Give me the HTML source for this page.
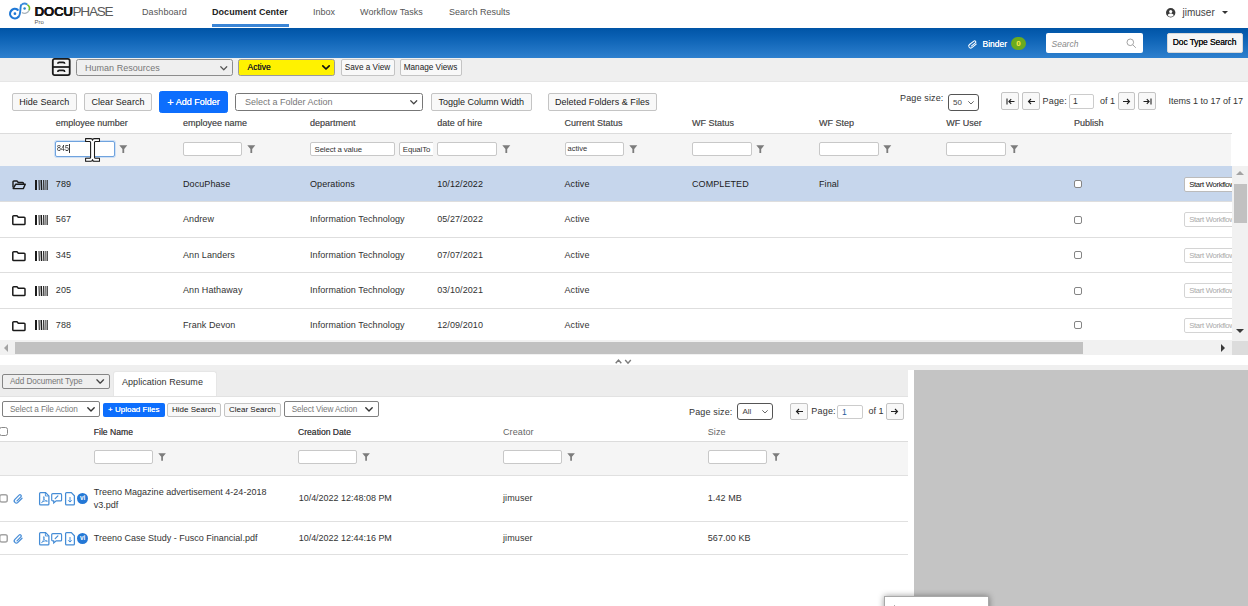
<!DOCTYPE html>
<html>
<head>
<meta charset="utf-8">
<title>DocuPhase - Document Center</title>
<style>
*{box-sizing:border-box;margin:0;padding:0}
html,body{width:1248px;height:606px;overflow:hidden;background:#fff}
body{font-family:"Liberation Sans",sans-serif;font-size:9px;color:#333;position:relative}
.a{position:absolute;white-space:nowrap}
.t{position:absolute;white-space:nowrap;line-height:12px;height:12px}
.btn{position:absolute;background:#f8f8f8;border:1px solid #c4c4c4;border-radius:2px;color:#222;text-align:center;white-space:nowrap}
.blue{background:#0d6efd;border-color:#0d6efd;color:#fff}
.sel{position:absolute;background:#fff;border:1px solid #8a8a8a;border-radius:2px;color:#666;white-space:nowrap}
.inp{position:absolute;background:#fff;border:1px solid #c8c8c8;border-radius:2px}
.hl{position:absolute;left:0;height:1px;background:#e2e2e2}
.cb{position:absolute;width:8px;height:8px;border:1px solid #777;border-radius:2px;background:#fff}
svg{position:absolute;overflow:visible}
</style>
</head>
<body>

<!-- ===== top header ===== -->
<div class="a" id="hdr" style="left:0;top:0;width:1248px;height:28px;background:#fff"></div>
<svg style="left:8px;top:1px" width="24" height="21" viewBox="0 0 24 21">
 <path d="M9.650 8.770A4.800 4.800 0 1 0 10.290 16.090" fill="none" stroke="#1f78d6" stroke-width="2.200" stroke-linecap="round"/>
 <path d="M10.290 16.090C13 13.800 11.900 7.300 13.030 4.290" fill="none" stroke="#2a7fd6" stroke-width="1.900" stroke-linecap="round"/>
 <path d="M13.030 4.290A4.800 4.800 0 0 1 19.350 3.570" fill="none" stroke="#3b8cdc" stroke-width="1.700"/>
 <path d="M19.350 3.570A4.800 4.800 0 0 1 20.950 9.530" fill="none" stroke="#72bf2c" stroke-width="1.600"/>
 <path d="M20.950 9.530A4.800 4.800 0 0 1 13.850 11.430" fill="none" stroke="#a9b4bd" stroke-width="1.300"/>
 <circle cx="6.900" cy="12.700" r="1.350" fill="#1f78d6"/><circle cx="16.600" cy="7.500" r="1.250" fill="#2a86c8"/>
</svg>
<div class="a" style="left:34.5px;top:2.5px;font-size:13.6px;line-height:17px;font-weight:bold;color:#161616;letter-spacing:-.450px;text-shadow:0 0 .5px #161616">DOCU</div>
<div class="a" style="left:72.5px;top:2.5px;font-size:13.6px;line-height:17px;color:#5a5a5a;letter-spacing:-1.25px">PHASE</div>
<div class="a" style="left:34.5px;top:17.5px;font-size:6px;line-height:8px;color:#555">Pro</div>
<div class="t" style="left:142px;top:6px;color:#555;letter-spacing:.1px">Dashboard</div>
<div class="t" style="left:212px;top:6px;color:#222;font-weight:bold;letter-spacing:.05px">Document Center</div>
<div class="a" style="left:212px;top:23.800px;width:77px;height:3px;background:#3a85d6"></div>
<div class="t" style="left:313px;top:6px;color:#555">Inbox</div>
<div class="t" style="left:360px;top:6px;color:#555;letter-spacing:.05px">Workflow Tasks</div>
<div class="t" style="left:449px;top:6px;color:#555">Search Results</div>
<svg style="left:1166px;top:8px" width="9.4" height="9.4" viewBox="0 0 20 20"><circle cx="10" cy="10" r="10" fill="#3a3a3a"/><circle cx="10" cy="7.6" r="3.4" fill="#fff"/><path d="M3.6 15.2c1.2-2.4 3.6-3.4 6.4-3.4s5.2 1 6.4 3.4a8 8 0 0 1-12.8 0z" fill="#fff"/></svg>
<div class="a" style="left:1182.5px;top:7px;font-size:10px;line-height:12px;color:#444">jimuser</div>
<div class="a" style="left:1221.5px;top:10.5px;width:0;height:0;border-left:3.2px solid transparent;border-right:3.2px solid transparent;border-top:3px solid #333"></div>

<!-- ===== blue bar ===== -->
<div class="a" style="left:0;top:28px;width:1248px;height:30px;background:linear-gradient(#0054a6 0%,#0a60b3 30%,#2e80ce 100%)"></div>
<svg style="left:968px;top:39px" width="10" height="10" viewBox="0 0 10 10"><path d="M3.6 7.3 7.2 3.6a1.15 1.15 0 0 0-1.7-1.6L1.6 6a1.9 1.9 0 0 0 2.8 2.7L8.2 4.6" fill="none" stroke="#fff" stroke-width="1" stroke-linecap="round" transform="rotate(8 5 5)"/></svg>
<div class="t" style="left:982.5px;top:38px;color:#fff;font-size:8.5px;text-shadow:0 0 .4px #fff;letter-spacing:0">Binder</div>
<div class="a" style="left:1011px;top:36.5px;width:15px;height:13px;border-radius:6.5px;background:#6bab1f;color:#ffe94a;font-size:8px;font-weight:bold;line-height:13px;text-align:center">0</div>
<div class="a" style="left:1045.500px;top:33.200px;width:97px;height:19.500px;background:#fff;border-radius:2px"></div>
<div class="t" style="left:1051.5px;top:37.5px;color:#8a8a8a;font-style:italic;font-size:8.5px">Search</div>
<svg style="left:1126px;top:37.5px" width="11" height="11" viewBox="0 0 11 11"><circle cx="4.3" cy="4.3" r="3.3" fill="none" stroke="#999" stroke-width=".9"/><path d="M6.8 6.8 9.8 9.8" stroke="#999" stroke-width=".9"/></svg>
<div class="a" style="left:1166.500px;top:33.200px;width:76px;height:19.500px;background:#f6f6f6;border:1px solid #d8d8d8;border-radius:2px;text-align:center;line-height:17px;font-size:8.5px;color:#111;text-shadow:0 0 .2px #111;letter-spacing:-.1px">Doc Type Search</div>

<!-- ===== view bar ===== -->
<div class="a" style="left:0;top:58px;width:1248px;height:23.500px;background:#efefef;border-bottom:1px solid #e6e6e6"></div>
<svg style="left:52.400px;top:58.100px" width="18.500" height="18" viewBox="0 0 18.500 17.500" preserveAspectRatio="none"><rect x=".8" y=".8" width="16.9" height="15.9" rx="1.800" fill="#f4f4f4" stroke="#1a1a1a" stroke-width="1.800"/><path d="M.8 8.750H17.700" stroke="#1a1a1a" stroke-width="1.700"/><path d="M5.800 5.700Q5.800 4.200 7.300 4.200H11.200Q12.700 4.200 12.700 5.700M5.800 13.500Q5.800 12 7.300 12H11.200Q12.700 12 12.700 13.500" fill="none" stroke="#1a1a1a" stroke-width="1.600"/></svg>
<div class="sel" style="left:75.5px;top:59px;width:157px;height:17px;background:#efefef;border-color:#8d8d8d;border-radius:2.500px;line-height:16.200px;padding-left:8.500px;color:#777;letter-spacing:.02px">Human Resources</div>
<svg style="left:220px;top:65.5px" width="7.5" height="4.5" viewBox="0 0 10 6"><path d="M1 1 5 5 9 1" fill="none" stroke="#555" stroke-width="1.60" stroke-linecap="round" stroke-linejoin="round"/></svg>
<div class="sel" style="left:237.5px;top:59px;width:97.5px;height:17px;background:#fff200;border-color:#9a9a9a;border-radius:2.5px;line-height:15px;padding-left:9px;color:#1a1a1a;font-size:8.500px;text-shadow:0 0 .3px #333">Active</div>
<svg style="left:321.5px;top:65.2px" width="8" height="4.8" viewBox="0 0 10 6"><path d="M1 1 5 5 9 1" fill="none" stroke="#111" stroke-width="2.12" stroke-linecap="round" stroke-linejoin="round"/></svg>
<div class="btn" style="left:340.5px;top:59px;width:54px;height:17px;line-height:15px;font-size:8.2px;color:#222">Save a View</div>
<div class="btn" style="left:399.5px;top:59px;width:62px;height:17px;line-height:15px;font-size:8.2px;color:#222">Manage Views</div>

<!-- ===== toolbar ===== -->
<div class="btn" style="left:12px;top:93px;width:64.5px;height:18px;line-height:16px;letter-spacing:.05px">Hide Search</div>
<div class="btn" style="left:84px;top:93px;width:68px;height:18px;line-height:16px;letter-spacing:.05px">Clear Search</div>
<div class="btn blue" style="left:159px;top:91px;width:69px;height:22px;line-height:20px;border-radius:2.5px;text-shadow:0 0 .5px #fff"><span style="font-size:11px;line-height:9px;vertical-align:-.5px">+</span> Add Folder</div>
<div class="sel" style="left:235px;top:93px;width:187.5px;height:18px;line-height:16px;padding-left:9px;border-color:#777;border-radius:2.5px;color:#777">Select a Folder Action</div>
<svg style="left:409.5px;top:99.5px" width="7.5" height="4.5" viewBox="0 0 10 6"><path d="M1 1 5 5 9 1" fill="none" stroke="#444" stroke-width="1.60" stroke-linecap="round" stroke-linejoin="round"/></svg>
<div class="btn" style="left:430.5px;top:93px;width:101.5px;height:18px;line-height:16px">Toggle Column Width</div>
<div class="btn" style="left:547.5px;top:93px;width:109.5px;height:18px;line-height:16px;letter-spacing:.05px">Deleted Folders &amp; Files</div>
<div class="t" style="left:900px;top:91.5px;color:#333;letter-spacing:.15px">Page size:</div>
<div class="sel" style="left:947.5px;top:94px;width:31px;height:17px;line-height:15px;padding-left:4.5px;border-color:#555;border-radius:3px;color:#444;font-size:8px">50</div>
<svg style="left:968px;top:101.2px" width="6" height="3.6" viewBox="0 0 10 6"><path d="M1 1 5 5 9 1" fill="none" stroke="#555" stroke-width="1.50" stroke-linecap="round" stroke-linejoin="round"/></svg>
<div class="btn" style="left:1001px;top:92px;width:18px;height:18px"></div>
<svg style="left:1005.5px;top:97.5px" width="9" height="7" viewBox="0 0 9 7"><path d="M1 .5V6.5M8.5 3.5H3M5.2 1.2 2.9 3.5 5.2 5.8" fill="none" stroke="#222" stroke-width="1.1"/></svg>
<div class="btn" style="left:1022px;top:92px;width:17.5px;height:18px"></div>
<svg style="left:1026.5px;top:97.5px" width="9" height="7" viewBox="0 0 9 7"><path d="M8 3.5H1.5M4 1 1.5 3.5 4 6" fill="none" stroke="#222" stroke-width="1.1"/></svg>
<div class="t" style="left:1042.5px;top:94.5px;color:#333;letter-spacing:.2px">Page:</div>
<div class="inp" style="left:1069px;top:94px;width:24.5px;height:14.5px;line-height:12.5px;padding-left:3px;font-size:8.5px;color:#333;border-color:#ccc">1</div>
<div class="t" style="left:1100px;top:94.5px;color:#333">of 1</div>
<div class="btn" style="left:1117.5px;top:92px;width:17.5px;height:18px"></div>
<svg style="left:1122px;top:97.5px" width="9" height="7" viewBox="0 0 9 7"><path d="M1 3.5H7.5M5 1 7.5 3.5 5 6" fill="none" stroke="#222" stroke-width="1.1"/></svg>
<div class="btn" style="left:1137.5px;top:92px;width:18.5px;height:18px"></div>
<svg style="left:1142.5px;top:97.5px" width="9" height="7" viewBox="0 0 9 7"><path d="M8 .5V6.5M.5 3.5H6M3.8 1.2 6.1 3.5 3.8 5.8" fill="none" stroke="#222" stroke-width="1.1"/></svg>
<div class="t" style="left:1168.5px;top:94.5px;color:#333">Items 1 to 17 of 17</div>

<!-- ===== grid ===== -->
<div class="t" style="left:55.8px;top:117.2px;color:#555;letter-spacing:0;text-shadow:0 0 .3px #777">employee number</div>
<div class="t" style="left:183px;top:117.2px;color:#555;letter-spacing:0;text-shadow:0 0 .3px #777">employee name</div>
<div class="t" style="left:310px;top:117.2px;color:#555;letter-spacing:0;text-shadow:0 0 .3px #777">department</div>
<div class="t" style="left:437.2px;top:117.2px;color:#555;letter-spacing:0;text-shadow:0 0 .3px #777">date of hire</div>
<div class="t" style="left:564.5px;top:117.2px;color:#555;letter-spacing:0;text-shadow:0 0 .3px #777">Current Status</div>
<div class="t" style="left:692px;top:117.2px;color:#555;letter-spacing:0;text-shadow:0 0 .3px #777">WF Status</div>
<div class="t" style="left:819px;top:117.2px;color:#555;letter-spacing:0;text-shadow:0 0 .3px #777">WF Step</div>
<div class="t" style="left:946.3px;top:117.2px;color:#555;letter-spacing:0;text-shadow:0 0 .3px #777">WF User</div>
<div class="t" style="left:1074px;top:117.2px;color:#555;letter-spacing:0;text-shadow:0 0 .3px #777">Publish</div>
<div class="hl" style="top:133px;width:1232px;background:#dcdcdc"></div>
<div class="a" style="left:0;top:134px;width:1231px;height:32px;background:#f5f5f5"></div>
<div class="inp" style="left:55px;top:141.200px;width:60.200px;height:15.500px;border:1.200px solid #6fa3de;box-shadow:0 0 0 1px #cfe0f5"></div><div class="a" style="left:57px;top:142.700px;font-size:7px;line-height:12px;color:#222;margin-top:-.5px;transform:scaleY(1.300);transform-origin:50% 50%;letter-spacing:.1px">845</div>
<div class="a" style="left:69.200px;top:144.200px;width:1px;height:8.500px;background:#333"></div>
<svg style="left:119px;top:144.6px" width="8.6" height="8.4" viewBox="0 0 8.6 8.4"><path d="M.3 .3H8.3L5.2 3.9V8.1H3.4V3.9Z" fill="#7c7c7c"/></svg>
<div class="inp" style="left:183px;top:141.7px;width:59px;height:14.8px;line-height:12.8px;padding-left:3px;font-size:7.5px;color:#333;"></div>
<svg style="left:246.5px;top:144.6px" width="8.6" height="8.4" viewBox="0 0 8.6 8.4"><path d="M.3 .3H8.3L5.2 3.9V8.1H3.4V3.9Z" fill="#7c7c7c"/></svg>
<div class="inp" style="left:310.2px;top:141.7px;width:85px;height:14.8px;line-height:14.600px;padding-left:3.400px;font-size:7.800px;color:#333;letter-spacing:-.120px;">Select a value</div>
<div class="a" style="left:399px;top:141.7px;width:34px;height:14.8px;overflow:hidden"><div class="inp" style="left:0;top:0;width:50px;height:14.800px;line-height:14.600px;padding-left:2.800px;font-size:7.800px;color:#333;letter-spacing:-.100px">EqualTo</div></div>
<div class="inp" style="left:437.3px;top:141.7px;width:59.7px;height:14.8px;line-height:12.8px;padding-left:3px;font-size:7.5px;color:#333;"></div>
<svg style="left:502px;top:144.6px" width="8.6" height="8.4" viewBox="0 0 8.6 8.4"><path d="M.3 .3H8.3L5.2 3.9V8.1H3.4V3.9Z" fill="#7c7c7c"/></svg>
<div class="inp" style="left:565px;top:141.7px;width:59px;height:14.8px;line-height:12.8px;padding-left:1.500px;font-size:7.500px;color:#333;">active</div>
<svg style="left:629px;top:144.6px" width="8.6" height="8.4" viewBox="0 0 8.6 8.4"><path d="M.3 .3H8.3L5.2 3.9V8.1H3.4V3.9Z" fill="#7c7c7c"/></svg>
<div class="inp" style="left:692px;top:141.7px;width:59.5px;height:14.8px;line-height:12.8px;padding-left:3px;font-size:7.5px;color:#333;"></div>
<svg style="left:756px;top:144.6px" width="8.6" height="8.4" viewBox="0 0 8.6 8.4"><path d="M.3 .3H8.3L5.2 3.9V8.1H3.4V3.9Z" fill="#7c7c7c"/></svg>
<div class="inp" style="left:819px;top:141.7px;width:59.5px;height:14.8px;line-height:12.8px;padding-left:3px;font-size:7.5px;color:#333;"></div>
<svg style="left:883px;top:144.6px" width="8.6" height="8.4" viewBox="0 0 8.6 8.4"><path d="M.3 .3H8.3L5.2 3.9V8.1H3.4V3.9Z" fill="#7c7c7c"/></svg>
<div class="inp" style="left:946.3px;top:141.7px;width:59.5px;height:14.8px;line-height:12.8px;padding-left:3px;font-size:7.5px;color:#333;"></div>
<svg style="left:1010.3px;top:144.6px" width="8.6" height="8.4" viewBox="0 0 8.6 8.4"><path d="M.3 .3H8.3L5.2 3.9V8.1H3.4V3.9Z" fill="#7c7c7c"/></svg>
<div class="a" style="left:0;top:166px;width:1248px;height:174.500px;overflow:hidden">
<div class="a" style="left:0;top:0;width:1232px;height:35px;background:#c6d6ec"></div>
<svg style="left:11.600px;top:13.6px" width="14.200" height="10.400" viewBox="0 0 14.200 10.400"><path d="M1 7.600V1.900c0-.5 .4-.9 .9-.9H5l1.300 1.500h4.300c.5 0 .9 .4 .9 .9v.9" fill="none" stroke="#1a1a1a" stroke-width="1.4" stroke-linejoin="round"/><path d="M3.600 4.300H13.300L11.300 8.600H1.200Z" fill="none" stroke="#1a1a1a" stroke-width="1.4" stroke-linejoin="round"/></svg>
<svg style="left:34.800px;top:13.5px" width="12.800" height="10" viewBox="0 0 12.800 10"><path d="M1 0V10" stroke="#1a1a1a" stroke-width="2"/><path d="M4 0 4.300 10" stroke="#1a1a1a" stroke-width="1"/><path d="M6.200 0 6.600 10" stroke="#1a1a1a" stroke-width="1.500"/><path d="M8.600 0 8.900 10" stroke="#333" stroke-width="1.300"/><path d="M10.500 0 10.700 10" stroke="#555" stroke-width=".8"/><path d="M12.200 0V10" stroke="#1a1a1a" stroke-width="1.100"/></svg>
<div class="t" style="left:55.8px;top:11.7px;color:#222;letter-spacing:.08px">789</div>
<div class="t" style="left:183px;top:11.7px;color:#222;letter-spacing:.08px">DocuPhase</div>
<div class="t" style="left:310px;top:11.7px;color:#222;letter-spacing:.08px">Operations</div>
<div class="t" style="left:437.2px;top:11.7px;color:#222;letter-spacing:.08px">10/12/2022</div>
<div class="t" style="left:564.5px;top:11.7px;color:#222;letter-spacing:.08px">Active</div>
<div class="t" style="left:692px;top:11.7px;color:#222;letter-spacing:.08px">COMPLETED</div>
<div class="t" style="left:819px;top:11.7px;color:#222;letter-spacing:.08px">Final</div>
<div class="cb" style="left:1074px;top:14.40px;border-color:#858585"></div>
<div class="a" style="left:1184px;top:10.6px;width:48px;height:15px;overflow:hidden"><div class="btn" style="left:0;top:0;width:70px;height:15px;line-height:13px;text-align:left;padding-left:4.200px;font-size:7.700px;letter-spacing:-.320px;background:#fff;border-color:#bbb;color:#111">Start Workflow</div></div>
<div class="hl" style="top:34.5px;width:1232px;background:#dedede"></div>
<svg style="left:11.600px;top:48.70px" width="14.200" height="10.400" viewBox="0 0 14.200 10.400"><path d="M.8 1.6c0-.5 .4-.9 .9-.9H5l1.3 1.5h5.8c.5 0 .9 .4 .9 .9v5.6c0 .5-.4 .9-.9 .9H1.700c-.5 0-.9-.4-.9-.9Z" fill="none" stroke="#1a1a1a" stroke-width="1.5" stroke-linejoin="round"/></svg>
<svg style="left:34.800px;top:48.60px" width="12.800" height="10" viewBox="0 0 12.800 10"><path d="M1 0V10" stroke="#1a1a1a" stroke-width="2"/><path d="M4 0 4.300 10" stroke="#1a1a1a" stroke-width="1"/><path d="M6.200 0 6.600 10" stroke="#1a1a1a" stroke-width="1.500"/><path d="M8.600 0 8.900 10" stroke="#333" stroke-width="1.300"/><path d="M10.500 0 10.700 10" stroke="#555" stroke-width=".8"/><path d="M12.200 0V10" stroke="#1a1a1a" stroke-width="1.100"/></svg>
<div class="t" style="left:55.8px;top:46.80px;color:#333;letter-spacing:.08px">567</div>
<div class="t" style="left:183px;top:46.80px;color:#333;letter-spacing:.08px">Andrew</div>
<div class="t" style="left:310px;top:46.80px;color:#333;letter-spacing:.08px">Information Technology</div>
<div class="t" style="left:437.2px;top:46.80px;color:#333;letter-spacing:.08px">05/27/2022</div>
<div class="t" style="left:564.5px;top:46.80px;color:#333;letter-spacing:.08px">Active</div>
<div class="cb" style="left:1074px;top:49.50px;border-color:#858585"></div>
<div class="a" style="left:1184px;top:45.70px;width:48px;height:15px;overflow:hidden"><div class="btn" style="left:0;top:0;width:70px;height:15px;line-height:13px;text-align:left;padding-left:4.200px;font-size:7.700px;letter-spacing:-.320px;background:#fff;border-color:#d4d4d4;color:#aaa">Start Workflow</div></div>
<div class="hl" style="top:70.7px;width:1232px;background:#dedede"></div>
<svg style="left:11.600px;top:84.60px" width="14.200" height="10.400" viewBox="0 0 14.200 10.400"><path d="M.8 1.6c0-.5 .4-.9 .9-.9H5l1.3 1.5h5.8c.5 0 .9 .4 .9 .9v5.6c0 .5-.4 .9-.9 .9H1.700c-.5 0-.9-.4-.9-.9Z" fill="none" stroke="#1a1a1a" stroke-width="1.5" stroke-linejoin="round"/></svg>
<svg style="left:34.800px;top:84.50px" width="12.800" height="10" viewBox="0 0 12.800 10"><path d="M1 0V10" stroke="#1a1a1a" stroke-width="2"/><path d="M4 0 4.300 10" stroke="#1a1a1a" stroke-width="1"/><path d="M6.200 0 6.600 10" stroke="#1a1a1a" stroke-width="1.500"/><path d="M8.600 0 8.900 10" stroke="#333" stroke-width="1.300"/><path d="M10.500 0 10.700 10" stroke="#555" stroke-width=".8"/><path d="M12.200 0V10" stroke="#1a1a1a" stroke-width="1.100"/></svg>
<div class="t" style="left:55.8px;top:82.70px;color:#333;letter-spacing:.08px">345</div>
<div class="t" style="left:183px;top:82.70px;color:#333;letter-spacing:.08px">Ann Landers</div>
<div class="t" style="left:310px;top:82.70px;color:#333;letter-spacing:.08px">Information Technology</div>
<div class="t" style="left:437.2px;top:82.70px;color:#333;letter-spacing:.08px">07/07/2021</div>
<div class="t" style="left:564.5px;top:82.70px;color:#333;letter-spacing:.08px">Active</div>
<div class="cb" style="left:1074px;top:85.40px;border-color:#858585"></div>
<div class="a" style="left:1184px;top:81.60px;width:48px;height:15px;overflow:hidden"><div class="btn" style="left:0;top:0;width:70px;height:15px;line-height:13px;text-align:left;padding-left:4.200px;font-size:7.700px;letter-spacing:-.320px;background:#fff;border-color:#d4d4d4;color:#aaa">Start Workflow</div></div>
<div class="hl" style="top:105.8px;width:1232px;background:#dedede"></div>
<svg style="left:11.600px;top:119.70px" width="14.200" height="10.400" viewBox="0 0 14.200 10.400"><path d="M.8 1.6c0-.5 .4-.9 .9-.9H5l1.3 1.5h5.8c.5 0 .9 .4 .9 .9v5.6c0 .5-.4 .9-.9 .9H1.700c-.5 0-.9-.4-.9-.9Z" fill="none" stroke="#1a1a1a" stroke-width="1.5" stroke-linejoin="round"/></svg>
<svg style="left:34.800px;top:119.60px" width="12.800" height="10" viewBox="0 0 12.800 10"><path d="M1 0V10" stroke="#1a1a1a" stroke-width="2"/><path d="M4 0 4.300 10" stroke="#1a1a1a" stroke-width="1"/><path d="M6.200 0 6.600 10" stroke="#1a1a1a" stroke-width="1.500"/><path d="M8.600 0 8.900 10" stroke="#333" stroke-width="1.300"/><path d="M10.500 0 10.700 10" stroke="#555" stroke-width=".8"/><path d="M12.200 0V10" stroke="#1a1a1a" stroke-width="1.100"/></svg>
<div class="t" style="left:55.8px;top:117.80px;color:#333;letter-spacing:.08px">205</div>
<div class="t" style="left:183px;top:117.80px;color:#333;letter-spacing:.08px">Ann Hathaway</div>
<div class="t" style="left:310px;top:117.80px;color:#333;letter-spacing:.08px">Information Technology</div>
<div class="t" style="left:437.2px;top:117.80px;color:#333;letter-spacing:.08px">03/10/2021</div>
<div class="t" style="left:564.5px;top:117.80px;color:#333;letter-spacing:.08px">Active</div>
<div class="cb" style="left:1074px;top:120.50px;border-color:#858585"></div>
<div class="a" style="left:1184px;top:116.70px;width:48px;height:15px;overflow:hidden"><div class="btn" style="left:0;top:0;width:70px;height:15px;line-height:13px;text-align:left;padding-left:4.200px;font-size:7.700px;letter-spacing:-.320px;background:#fff;border-color:#d4d4d4;color:#aaa">Start Workflow</div></div>
<div class="hl" style="top:141.700px;width:1232px;background:#dedede"></div>
<svg style="left:11.600px;top:154.5px" width="14.200" height="10.400" viewBox="0 0 14.200 10.400"><path d="M.8 1.6c0-.5 .4-.9 .9-.9H5l1.3 1.5h5.8c.5 0 .9 .4 .9 .9v5.6c0 .5-.4 .9-.9 .9H1.700c-.5 0-.9-.4-.9-.9Z" fill="none" stroke="#1a1a1a" stroke-width="1.5" stroke-linejoin="round"/></svg>
<svg style="left:34.800px;top:154.4px" width="12.800" height="10" viewBox="0 0 12.800 10"><path d="M1 0V10" stroke="#1a1a1a" stroke-width="2"/><path d="M4 0 4.300 10" stroke="#1a1a1a" stroke-width="1"/><path d="M6.200 0 6.600 10" stroke="#1a1a1a" stroke-width="1.500"/><path d="M8.600 0 8.900 10" stroke="#333" stroke-width="1.300"/><path d="M10.500 0 10.700 10" stroke="#555" stroke-width=".8"/><path d="M12.200 0V10" stroke="#1a1a1a" stroke-width="1.100"/></svg>
<div class="t" style="left:55.8px;top:152.6px;color:#333;letter-spacing:.08px">788</div>
<div class="t" style="left:183px;top:152.6px;color:#333;letter-spacing:.08px">Frank Devon</div>
<div class="t" style="left:310px;top:152.6px;color:#333;letter-spacing:.08px">Information Technology</div>
<div class="t" style="left:437.2px;top:152.6px;color:#333;letter-spacing:.08px">12/09/2010</div>
<div class="t" style="left:564.5px;top:152.6px;color:#333;letter-spacing:.08px">Active</div>
<div class="cb" style="left:1074px;top:155.30px;border-color:#858585"></div>
<div class="a" style="left:1184px;top:151.5px;width:48px;height:15px;overflow:hidden"><div class="btn" style="left:0;top:0;width:70px;height:15px;line-height:13px;text-align:left;padding-left:4.200px;font-size:7.700px;letter-spacing:-.320px;background:#fff;border-color:#d4d4d4;color:#aaa">Start Workflow</div></div>
<div class="a" style="left:1232px;top:0;width:16px;height:175.500px;background:#f1f1f1"></div>
<div class="a" style="left:1234px;top:18.200px;width:13px;height:38.400px;background:#c1c1c1"></div>
<div class="a" style="left:1235.500px;top:5px;width:0;height:0;border-left:4.500px solid transparent;border-right:4.500px solid transparent;border-bottom:4.200px solid #a3a3a3"></div>
<div class="a" style="left:1235.500px;top:162.500px;width:0;height:0;border-left:4.500px solid transparent;border-right:4.500px solid transparent;border-top:4.200px solid #3a3a3a"></div>
</div>
<div class="a" style="left:0;top:339.800px;width:1248px;height:15.500px;background:#f1f1f1"></div>
<div class="a" style="left:14.500px;top:341.700px;width:1068.800px;height:12.500px;background:#c1c1c1"></div>
<div class="a" style="left:1232px;top:340.500px;width:16px;height:14.800px;background:#dcdcdc"></div>
<div class="a" style="left:4.200px;top:343.500px;width:0;height:0;border-top:4.500px solid transparent;border-bottom:4.500px solid transparent;border-right:4.600px solid #a3a3a3"></div>
<div class="a" style="left:1221.200px;top:343.800px;width:0;height:0;border-top:4.500px solid transparent;border-bottom:4.500px solid transparent;border-left:4.600px solid #3a3a3a"></div>
<svg style="left:615px;top:358.600px" width="16.500" height="5" viewBox="0 0 16.500 5"><path d="M.7 4.200 3.500 1 6.300 4.200M10.200 1 13 4.200 15.800 1" fill="none" stroke="#7c7c7c" stroke-width="1.400"/></svg>

<svg style="left:85px;top:138.100px;filter:drop-shadow(.7px .7px .6px rgba(0,0,0,.35))" width="15.100" height="23.800" viewBox="0 0 15.100 23.800"><path d="M.6 .6H5.600Q7.550 .6 7.550 2.300Q7.550 .6 9.500 .6H14.500V3.500H10.300Q9.500 3.500 9.500 4.500V19.300Q9.500 20.300 10.300 20.300H14.500V23.200H9.500Q7.550 23.200 7.550 21.500Q7.550 23.200 5.600 23.200H.6V20.300H4.800Q5.600 20.300 5.600 19.300V4.500Q5.600 3.500 4.800 3.500H.6Z" fill="#fff" stroke="#1c1c1c" stroke-width="1.050" stroke-linejoin="round"/></svg>
<!-- ===== lower pane ===== -->
<div class="a" style="left:0;top:365px;width:1248px;height:5px;background:#efefef"></div>
<div class="a" style="left:0;top:370px;width:908px;height:26.500px;background:#ededed"></div>
<div class="a" style="left:914px;top:370px;width:334px;height:236px;background:#c4c4c4"></div>
<div class="sel" style="left:2px;top:374.300px;width:108px;height:15px;background:#efefef;border:1.200px solid #858585;line-height:14.400px;padding-left:7px;font-size:8.2px;color:#777;letter-spacing:-.1px">Add Document Type</div>
<svg style="left:96.200px;top:379.200px" width="8.400" height="5" viewBox="0 0 10 6"><path d="M1 1 5 5 9 1" fill="none" stroke="#444" stroke-width="1.600" stroke-linecap="round" stroke-linejoin="round"/></svg>
<div class="hl" style="top:395.800px;width:908px;background:#e2e2e2"></div>
<div class="a" style="left:113px;top:370.700px;width:104px;height:25.500px;background:#fff;border-radius:3px 3px 0 0;border:1px solid #e6e6e6;border-bottom:0"></div>
<div class="t" style="left:122px;top:376.300px;color:#333;letter-spacing:.050px">Application Resume</div>
<div class="sel" style="left:2px;top:401.400px;width:98px;height:15.800px;border:1.200px solid #808080;line-height:16.400px;padding-left:7px;font-size:8.2px;color:#777;letter-spacing:-.1px">Select a File Action</div>
<svg style="left:87px;top:407px" width="8" height="4.8" viewBox="0 0 10 6"><path d="M1 1 5 5 9 1" fill="none" stroke="#333" stroke-width="1.75" stroke-linecap="round" stroke-linejoin="round"/></svg>
<div class="btn blue" style="left:103px;top:402.5px;width:61.5px;height:14.5px;line-height:12.5px;font-size:8px;border-radius:1.500px;text-shadow:0 0 .25px #fff;letter-spacing:0">+ Upload Files</div>
<div class="btn" style="left:167.3px;top:402.8px;width:53.5px;height:14.2px;line-height:12.2px;font-size:8px;color:#151515">Hide Search</div>
<div class="btn" style="left:223.8px;top:402.8px;width:57px;height:14.2px;line-height:12.2px;font-size:8px;color:#151515">Clear Search</div>
<div class="sel" style="left:283.700px;top:401.400px;width:95px;height:15.800px;border:1.200px solid #808080;line-height:16.400px;padding-left:7px;font-size:8.2px;color:#777;letter-spacing:-.1px">Select View Action</div>
<svg style="left:365px;top:407px" width="8" height="4.8" viewBox="0 0 10 6"><path d="M1 1 5 5 9 1" fill="none" stroke="#333" stroke-width="1.75" stroke-linecap="round" stroke-linejoin="round"/></svg>
<div class="t" style="left:689px;top:405.5px;color:#333;letter-spacing:.15px">Page size:</div>
<div class="sel" style="left:737px;top:403.3px;width:36px;height:17.2px;line-height:15px;padding-left:4.5px;border-color:#555;border-radius:3px;color:#444;font-size:8px">All</div>
<svg style="left:762px;top:410.3px" width="6" height="3.6" viewBox="0 0 10 6"><path d="M1 1 5 5 9 1" fill="none" stroke="#555" stroke-width="1.50" stroke-linecap="round" stroke-linejoin="round"/></svg>
<div class="btn" style="left:789.7px;top:402.6px;width:18px;height:17.6px"></div>
<svg style="left:794.5px;top:408px" width="9" height="7" viewBox="0 0 9 7"><path d="M8 3.5H1.5M4 1 1.5 3.5 4 6" fill="none" stroke="#222" stroke-width="1.1"/></svg>
<div class="t" style="left:811.3px;top:404.8px;color:#333;letter-spacing:.2px">Page:</div>
<div class="inp" style="left:837px;top:405px;width:25.8px;height:13.8px;line-height:12.5px;padding-left:4px;font-size:8.5px;color:#2a5a9a;border-color:#ccc">1</div>
<div class="t" style="left:868.5px;top:404.8px;color:#333">of 1</div>
<div class="btn" style="left:885.6px;top:402.6px;width:18px;height:17.6px"></div>
<svg style="left:890.4px;top:408px" width="9" height="7" viewBox="0 0 9 7"><path d="M1 3.5H7.5M5 1 7.5 3.5 5 6" fill="none" stroke="#222" stroke-width="1.1"/></svg>
<div class="cb" style="left:-1px;top:427.400px;width:9.200px;height:8.600px;border-color:#888;border-radius:2.500px"></div>
<div class="t" style="left:93.8px;top:425.8px;text-shadow:0 0 .4px #555;color:#444;font-size:8.600px;letter-spacing:0">File Name</div>
<div class="t" style="left:298px;top:425.8px;text-shadow:0 0 .4px #555;color:#444;font-size:8.600px;letter-spacing:0">Creation Date</div>
<div class="t" style="left:503px;top:425.8px;color:#666;letter-spacing:.1px">Creator</div>
<div class="t" style="left:707.7px;top:425.8px;color:#666;letter-spacing:.1px">Size</div>
<div class="hl" style="top:441.2px;width:908px;background:#dcdcdc"></div>
<div class="a" style="left:0;top:442.2px;width:908px;height:33px;background:#f5f5f5"></div>
<div class="hl" style="top:475px;width:908px;background:#e0e0e0"></div>
<div class="inp" style="left:93.8px;top:450.4px;width:59px;height:14px"></div>
<svg style="left:157.8px;top:453.3px" width="8.2" height="8" viewBox="0 0 8.6 8.4"><path d="M.3 .3H8.3L5.2 3.9V8.1H3.4V3.9Z" fill="#7c7c7c"/></svg>
<div class="inp" style="left:298px;top:450.4px;width:59px;height:14px"></div>
<svg style="left:362px;top:453.3px" width="8.2" height="8" viewBox="0 0 8.6 8.4"><path d="M.3 .3H8.3L5.2 3.9V8.1H3.4V3.9Z" fill="#7c7c7c"/></svg>
<div class="inp" style="left:503px;top:450.4px;width:59px;height:14px"></div>
<svg style="left:567px;top:453.3px" width="8.2" height="8" viewBox="0 0 8.6 8.4"><path d="M.3 .3H8.3L5.2 3.9V8.1H3.4V3.9Z" fill="#7c7c7c"/></svg>
<div class="inp" style="left:707.7px;top:450.4px;width:59px;height:14px"></div>
<svg style="left:771.7px;top:453.3px" width="8.2" height="8" viewBox="0 0 8.6 8.4"><path d="M.3 .3H8.3L5.2 3.9V8.1H3.4V3.9Z" fill="#7c7c7c"/></svg>
<svg style="left:-.600px;top:494.30px" width="9" height="9" viewBox="0 0 9 9"><rect x=".750" y=".750" width="7.500" height="7.300" rx="2" fill="#fff" stroke="#a4a4a4" stroke-width="1.500"/></svg>
<svg style="left:13px;top:493.0px" width="11" height="11.400" viewBox="0 0 11 11.400"><path d="M4 7.9 7.9 3.9a1.25 1.25 0 0 0-1.8-1.8L1.9 6.4a2.1 2.1 0 0 0 3 3L9 5.2" fill="none" stroke="#4a8fd8" stroke-width="1.300" stroke-linecap="round"/></svg>
<svg style="left:38.5px;top:491.9px" width="10.500" height="13.600" viewBox="0 0 10.500 13.600"><path d="M.6 1.6c0-.55 .45-1 1-1H6.6L9.9 3.9V12c0 .55-.45 1-1 1H1.6c-.55 0-1-.45-1-1Z" fill="#fff" stroke="#448cd6" stroke-width="1.250"/><path d="M6.4 .8V4h3.3" fill="none" stroke="#3f8bd8" stroke-width=".9"/><path d="M2.6 10.6c1.4-1.2 2.6-3.6 2.7-5.4 0-.8-.9-.8-.9 0 .1 1.700 1.500 3.600 3.400 4.200 .8 .2 .8-.7 0-.7-1.700 0-3.800 .8-5.200 1.900z" fill="none" stroke="#3f8bd8" stroke-width=".8"/></svg>
<svg style="left:50.600px;top:493.4px" width="11.300" height="10.600" viewBox="0 0 11.300 10.600"><path d="M1.7 .7H9.600c.55 0 1 .45 1 1V6.900c0 .55-.45 1-1 1H5.200L2.700 10V7.900H1.700c-.55 0-1-.45-1-1V1.700c0-.55 .45-1 1-1Z" fill="#fff" stroke="#448cd6" stroke-width="1.150"/><path d="M4.200 5.600 6.900 2.900" stroke="#448cd6" stroke-width="1.200" stroke-linecap="round"/></svg>
<svg style="left:64.800px;top:491.9px" width="10" height="13.600" viewBox="0 0 10 13.600"><path d="M.6 1.600c0-.55 .45-1 1-1H6.300L9.400 3.800V12c0 .55-.45 1-1 1H1.600c-.55 0-1-.45-1-1Z" fill="#fff" stroke="#448cd6" stroke-width="1.250"/><path d="M5 5V10M3.200 8.300 5 10.100 6.800 8.300" fill="none" stroke="#3f8bd8" stroke-width="1"/></svg>
<div class="a" style="left:77.200px;top:493.2px;width:11px;height:10.800px;border-radius:50%;background:#2478d6;color:#fff;font-size:6.400px;font-weight:bold;line-height:10.500px;text-align:center">vi</div>
<div class="t" style="left:93.800px;top:486.0px;color:#333;letter-spacing:.01px">Treeno Magazine advertisement 4-24-2018</div>
<div class="t" style="left:93.800px;top:498.8px;color:#333;letter-spacing:.01px">v3.pdf</div>
<div class="t" style="left:298.700px;top:492.4px;color:#333;letter-spacing:-.020px">10/4/2022 12:48:08 PM</div>
<div class="t" style="left:503px;top:492.4px;color:#333;letter-spacing:.1px">jimuser</div>
<div class="t" style="left:707.700px;top:492.4px;color:#333;letter-spacing:.1px">1.42 MB</div>
<div class="hl" style="top:521.400px;width:908px;background:#e0e0e0"></div>
<svg style="left:-.600px;top:534.00px" width="9" height="9" viewBox="0 0 9 9"><rect x=".750" y=".750" width="7.500" height="7.300" rx="2" fill="#fff" stroke="#a4a4a4" stroke-width="1.500"/></svg>
<svg style="left:13px;top:532.7px" width="11" height="11.400" viewBox="0 0 11 11.400"><path d="M4 7.9 7.9 3.9a1.25 1.25 0 0 0-1.8-1.8L1.9 6.4a2.1 2.1 0 0 0 3 3L9 5.2" fill="none" stroke="#4a8fd8" stroke-width="1.300" stroke-linecap="round"/></svg>
<svg style="left:38.5px;top:531.6px" width="10.500" height="13.600" viewBox="0 0 10.500 13.600"><path d="M.6 1.6c0-.55 .45-1 1-1H6.6L9.9 3.9V12c0 .55-.45 1-1 1H1.6c-.55 0-1-.45-1-1Z" fill="#fff" stroke="#448cd6" stroke-width="1.250"/><path d="M6.4 .8V4h3.3" fill="none" stroke="#3f8bd8" stroke-width=".9"/><path d="M2.6 10.6c1.4-1.2 2.6-3.6 2.7-5.4 0-.8-.9-.8-.9 0 .1 1.700 1.500 3.600 3.400 4.200 .8 .2 .8-.7 0-.7-1.700 0-3.800 .8-5.200 1.900z" fill="none" stroke="#3f8bd8" stroke-width=".8"/></svg>
<svg style="left:50.600px;top:533.1px" width="11.300" height="10.600" viewBox="0 0 11.300 10.600"><path d="M1.7 .7H9.600c.55 0 1 .45 1 1V6.900c0 .55-.45 1-1 1H5.200L2.700 10V7.900H1.700c-.55 0-1-.45-1-1V1.700c0-.55 .45-1 1-1Z" fill="#fff" stroke="#448cd6" stroke-width="1.150"/><path d="M4.200 5.600 6.900 2.900" stroke="#448cd6" stroke-width="1.200" stroke-linecap="round"/></svg>
<svg style="left:64.800px;top:531.6px" width="10" height="13.600" viewBox="0 0 10 13.600"><path d="M.6 1.600c0-.55 .45-1 1-1H6.300L9.400 3.800V12c0 .55-.45 1-1 1H1.600c-.55 0-1-.45-1-1Z" fill="#fff" stroke="#448cd6" stroke-width="1.250"/><path d="M5 5V10M3.200 8.300 5 10.100 6.800 8.300" fill="none" stroke="#3f8bd8" stroke-width="1"/></svg>
<div class="a" style="left:77.200px;top:532.9px;width:11px;height:10.800px;border-radius:50%;background:#2478d6;color:#fff;font-size:6.400px;font-weight:bold;line-height:10.500px;text-align:center">vi</div>
<div class="t" style="left:93.800px;top:532.1px;color:#333;letter-spacing:.01px">Treeno Case Study - Fusco Financial.pdf</div>
<div class="t" style="left:298.700px;top:532.1px;color:#333;letter-spacing:-.020px">10/4/2022 12:44:16 PM</div>
<div class="t" style="left:503px;top:532.1px;color:#333;letter-spacing:.1px">jimuser</div>
<div class="t" style="left:707.700px;top:532.1px;color:#333;letter-spacing:.1px">567.00 KB</div>
<div class="hl" style="top:554.400px;width:908px;background:#e0e0e0"></div>
<div class="a" style="left:883.500px;top:595.800px;width:105px;height:20px;background:#fff;border:1px solid #a8a8a8;box-shadow:0 0 6px rgba(0,0,0,.4)"></div>
<div class="a" style="left:893.800px;top:604.800px;width:1.200px;height:2px;background:#aaa"></div>

</body>
</html>
